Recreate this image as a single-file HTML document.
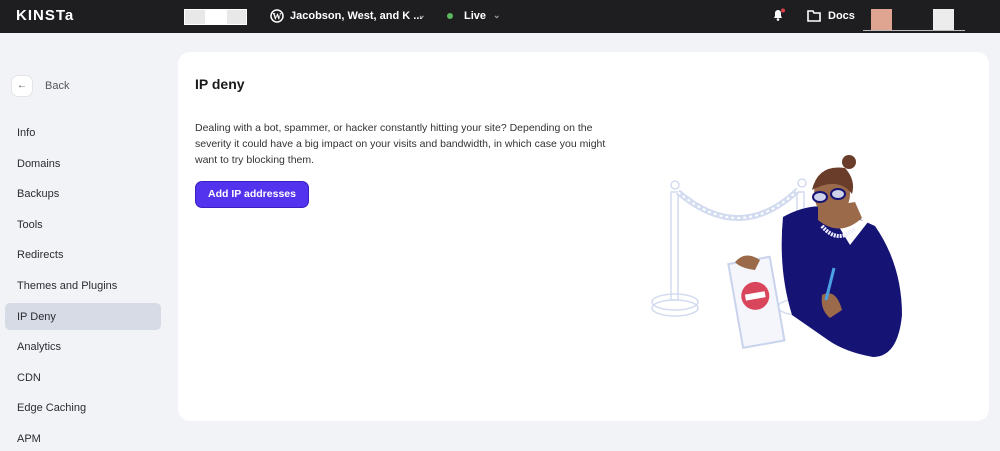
<!DOCTYPE html>
<html><head><meta charset="utf-8"><style>
*{box-sizing:border-box;margin:0;padding:0}
body{width:1000px;height:451px;overflow:hidden;background:#f2f3f7;font-family:"Liberation Sans",sans-serif;position:relative}
.top{position:absolute;left:0;top:0;width:1000px;height:33px;background:#1e1e20;color:#fff;font-size:11px;font-weight:bold}
.top span{position:absolute;top:10px}
.side a{position:absolute;left:17px;font-size:11px;color:#2b2b33}
.card{position:absolute;left:178px;top:52px;width:811px;height:369px;background:#fff;border-radius:12px}
</style></head><body>
<div class="top">
<span style="left:16px;top:7px;font-size:15px;letter-spacing:1px;font-weight:900">KINSTa</span>
<div style="position:absolute;left:184px;top:9px;width:63px;height:16px;background:#e8e8e8;border:1px solid #fff"><div style="position:absolute;left:20px;top:0;width:22px;height:14px;background:#fff"></div></div>
<svg style="position:absolute;left:270px;top:9px" width="14" height="14"><circle cx="7" cy="7" r="6" fill="none" stroke="#fff" stroke-width="1.5"/><text x="7" y="10.5" font-size="9" text-anchor="middle" fill="#fff" font-family="Liberation Serif" font-weight="bold">W</text></svg>
<span style="left:290px">Jacobson, West, and K ...</span>
<span style="left:418px;color:#999;font-size:9px">⌄</span>
<div style="position:absolute;left:447px;top:13px;width:6px;height:6px;border-radius:50%;background:#5cb85c"></div>
<span style="left:464px">Live</span>
<span style="left:493px;color:#999;font-size:9px">⌄</span>
<svg style="position:absolute;left:771px;top:8px" width="14" height="14"><path d="M3 10h8l-1-2V5a3 3 0 0 0-6 0v3z" fill="#fff"/><circle cx="7" cy="11.5" r="1.3" fill="#fff"/><circle cx="12" cy="2.5" r="2" fill="#e0404a"/></svg>
<svg style="position:absolute;left:807px;top:10px" width="14" height="12"><path d="M1 1h5l1 2h6v8H1z" fill="none" stroke="#fff" stroke-width="1.6"/></svg>
<span style="left:828px">Docs</span>
<div style="position:absolute;left:871px;top:9px;width:21px;height:21px;background:#e0a590"></div>
<div style="position:absolute;left:933px;top:9px;width:21px;height:21px;background:#ececec"></div>
<div style="position:absolute;left:863px;top:30px;width:102px;height:1px;background:#bbb"></div>
</div>
<div class="side">
<div style="position:absolute;left:11px;top:75px;width:22px;height:22px;border-radius:7px;background:#fff;border:1px solid #e3e4ea;font-size:10px;text-align:center;line-height:20px;color:#555">←</div>
<a style="top:80px;left:45px;color:#555">Back</a>
<a style="top:127px">Info</a><a style="top:158px">Domains</a><a style="top:188px">Backups</a><a style="top:219px">Tools</a><a style="top:249px">Redirects</a><a style="top:280px">Themes and Plugins</a>
<div style="position:absolute;left:5px;top:303px;width:156px;height:27px;background:#d6dbe5;border-radius:5px"></div>
<a style="top:311px">IP Deny</a><a style="top:341px">Analytics</a><a style="top:372px">CDN</a><a style="top:402px">Edge Caching</a><a style="top:433px">APM</a>
</div>
<div class="card">
<div style="position:absolute;left:17px;top:24px;font-size:14px;font-weight:bold;color:#1a1a1a">IP deny</div>
<div style="position:absolute;left:17px;top:68px;width:420px;font-size:10.5px;line-height:16px;color:#333">Dealing with a bot, spammer, or hacker constantly hitting your site? Depending on the severity it could have a big impact on your visits and bandwidth, in which case you might want to try blocking them.</div>
<div style="position:absolute;left:17px;top:129px;width:114px;height:27px;background:#5333ed;border:1px solid #3a20c0;border-radius:7px;color:#fff;font-size:10.5px;font-weight:bold;text-align:center;line-height:25px">Add IP addresses</div>
</div>
<svg style="position:absolute;left:640px;top:150px" width="280" height="220">
<g fill="none" stroke="#d3dbf0" stroke-width="1.5">
<ellipse cx="35" cy="152" rx="23" ry="8"/><ellipse cx="35" cy="158" rx="23" ry="8"/>
<ellipse cx="160" cy="157" rx="22" ry="8"/>
<rect x="31" y="42" width="7" height="108"/><rect x="157" y="42" width="7" height="110"/>
<path d="M38 42 Q100 95 158 40" stroke-width="6"/><path d="M38 42 Q100 95 158 40" stroke="#fff" stroke-width="2" stroke-dasharray="3 3"/>
<circle cx="35" cy="35" r="4"/><circle cx="162" cy="33" r="4"/>
</g>
<path d="M143 67 Q170 52 195 58 L235 76 Q262 115 262 165 Q258 207 233 207 Q205 202 188 190 L152 165 Q138 120 143 67Z" fill="#151475"/>
<path d="M190 62 L210 95 L228 72Z" fill="#fff"/>
<path d="M178 58 L178 70 Q200 88 222 68 L215 52Z" fill="#9a6a4a"/>
<ellipse cx="192" cy="44" rx="18" ry="22" fill="#9a6a4a"/>
<path d="M172 40 Q178 14 205 18 Q216 30 212 44 Q198 26 172 40Z" fill="#6a3d2a"/>
<circle cx="209" cy="12" r="7" fill="#6a3d2a"/>
<ellipse cx="180" cy="47" rx="7" ry="5" fill="#cfd3ea" stroke="#151475" stroke-width="2"/>
<ellipse cx="198" cy="44" rx="7" ry="5" fill="#cfd3ea" stroke="#151475" stroke-width="2"/>
<path d="M182 76 Q198 95 215 78" fill="none" stroke="#eef" stroke-width="4" stroke-dasharray="2 1"/>
<g transform="rotate(-10 115 150)"><rect x="95" y="110" width="42" height="85" fill="#f4f6fc" stroke="#c9d3ec" stroke-width="2"/>
<circle cx="116" cy="146" r="14" fill="#d9455a"/><rect x="106" y="143" width="20" height="6" fill="#fff"/></g>
<path d="M95 112 Q105 100 120 110 L115 120 Q100 118 95 112Z" fill="#9a6a4a"/>
<path d="M182 145 Q196 138 202 160 L190 168 Q180 160 182 145Z" fill="#9a6a4a"/>
<path d="M186 150 L194 118" stroke="#4aa0e0" stroke-width="3"/>
</svg>
</body></html>
